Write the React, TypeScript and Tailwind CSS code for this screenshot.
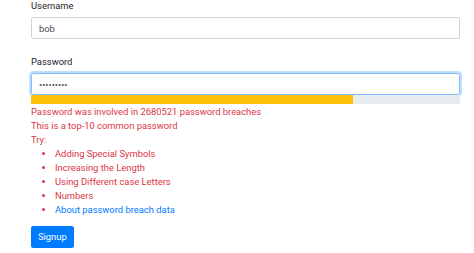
import { useState } from 'react';

const suggestions = [
    'Adding Special Symbols',
    'Increasing the Length',
    'Using Different case Letters',
    'Numbers',
];

export default function App() {
    const [username, setUsername] = useState('bob');
    const [password, setPassword] = useState('123456789');

    return (
        <div className="w-[474px] h-[253px] overflow-hidden bg-white pl-[31px] pr-[14px] text-[9.4px] leading-[14px] text-[#212529] font-['Roboto',sans-serif]">
            <form className="mt-[-1px]" onSubmit={e => e.preventDefault()}>
                {/* Username */}
                <div className="mb-[16px]">
                    <label className="block mb-[4px]">Username</label>
                    <input
                        className="block w-full h-[22px] px-[7px] rounded-[2.3px] border border-[#ced4da] text-[#495057] outline-none"
                        value={username}
                        onChange={e => setUsername(e.target.value)}
                    />
                </div>

                {/* Password */}
                <div>
                    <label className="block mb-[4px]">Password</label>
                    <input
                        type="password"
                        className="block w-full h-[22px] px-[7px] rounded-[2.3px] border border-[#80bdff] text-[#495057] outline-none shadow-[0_0_0_1.9px_rgba(0,123,255,0.25)]"
                        value={password}
                        onChange={e => setPassword(e.target.value)}
                    />
                    <div className="flex h-[9px] bg-[#e9ecef] overflow-hidden">
                        <div className="h-full w-[75%] bg-[#ffc107]" />
                    </div>
                    <div className="mt-[1px] text-[#dc3545]">
                        <div>Password was involved in 2680521 password breaches</div>
                        <div>This is a top-10 common password</div>
                        <div>Try:</div>
                        <ul className="list-disc pl-[24px]">
                            {suggestions.map(s => (
                                <li key={s}>{s}</li>
                            ))}
                            <li>
                                <a href="#" className="text-[#007bff]">About password breach data</a>
                            </li>
                        </ul>
                    </div>
                </div>

                <button
                    type="submit"
                    className="mt-[9px] h-[22px] px-[7px] rounded-[2.3px] bg-[#007bff] text-white"
                >
                    Signup
                </button>
            </form>
        </div>
    );
}
